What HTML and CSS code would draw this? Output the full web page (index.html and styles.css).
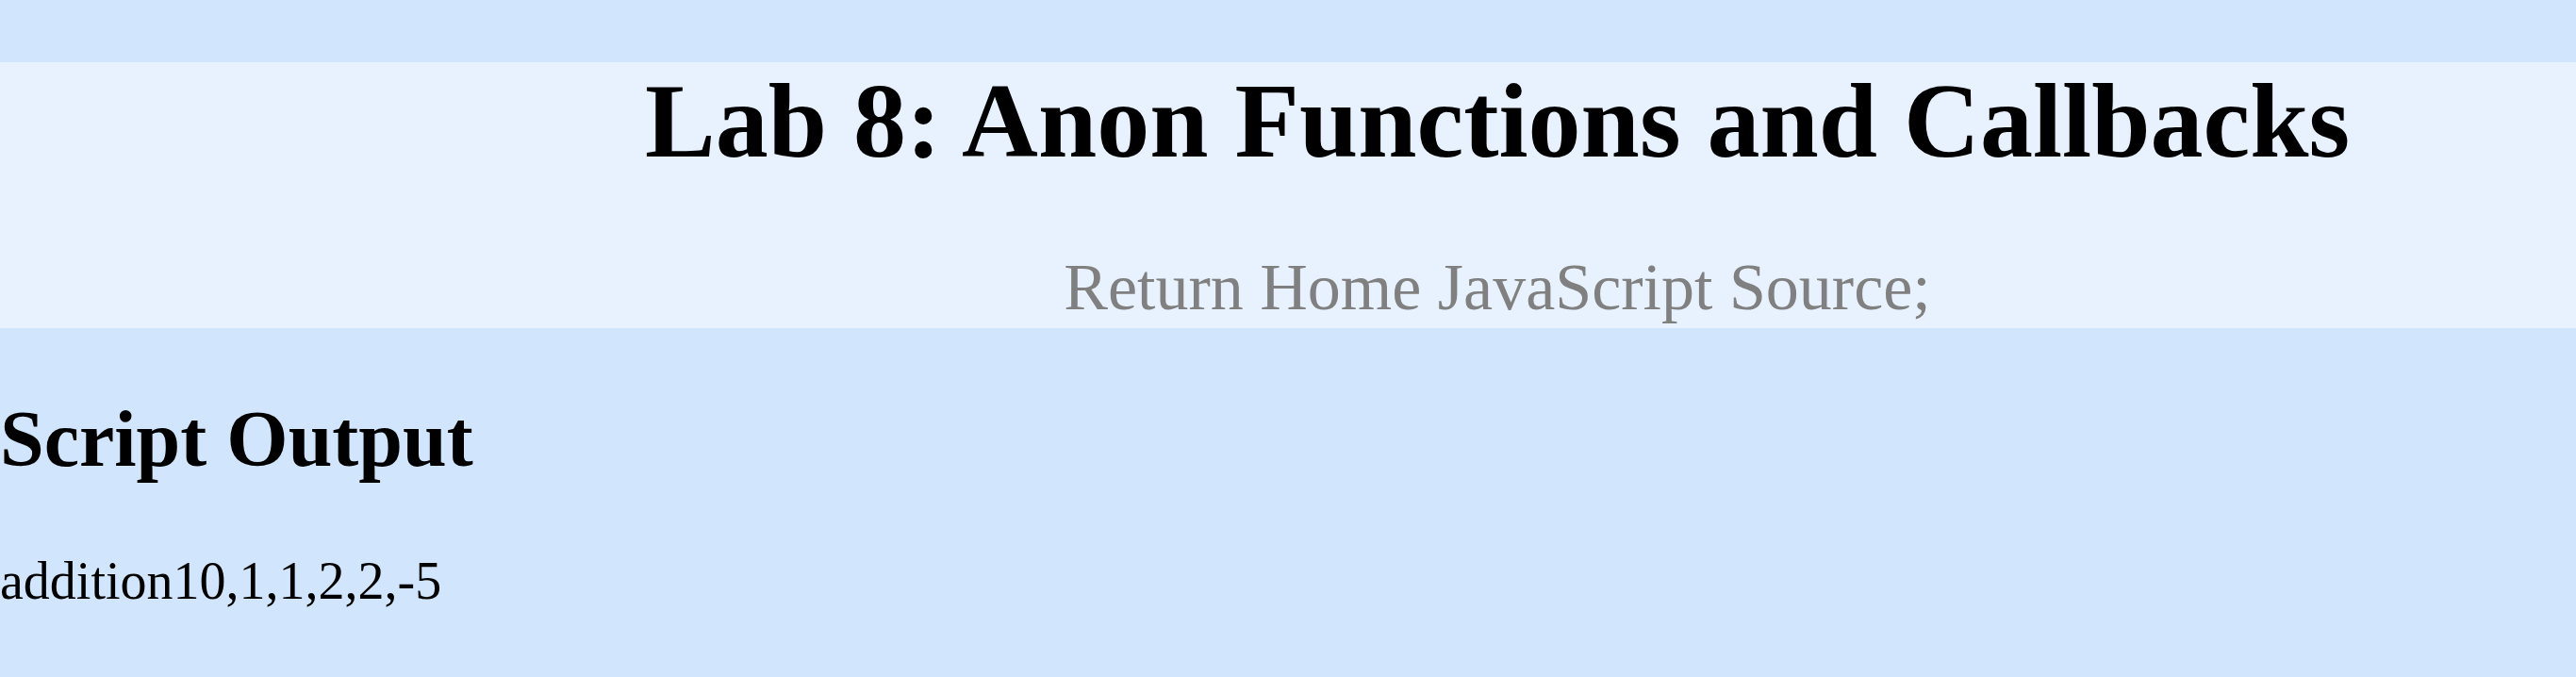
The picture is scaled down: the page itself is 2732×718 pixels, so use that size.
FILE: index.html
```html
<!DOCTYPE html>
<html>
<head>
<meta charset="utf-8">
<title>Lab 8</title>
<link rel="stylesheet" href="styles.css">
</head>
<body>
<header class="banner">
  <h1 class="title">Lab 8: Anon Functions and Callbacks</h1>
  <nav class="links">Return Home JavaScript Source;</nav>
</header>
<main class="content">
  <h2 class="section-title">Script Output</h2>
  <p class="output">addition10,1,1,2,2,-5</p>
</main>
</body>
</html>
```
FILE: styles.css
```css
html, body {
  margin: 0;
  padding: 0;
}
body {
  background: #d1e5fc;
  font-family: "Liberation Serif", "Times New Roman", serif;
  color: #000;
  width: 2732px;
  height: 718px;
  overflow: hidden;
}
.banner {
  margin-top: 66px;
  height: 282px;
  box-sizing: border-box;
  background: #e7f2fe;
  padding: 6px 0 0 444px;
  text-align: center;
  display: flex;
  flex-direction: column;
  align-items: center;
  gap: 86px;
}
.title {
  margin: 0;
  font-size: 112px;
  line-height: 1;
  font-weight: bold;
}
.links {
  font-size: 70px;
  line-height: 1;
  color: #808080;
}
.content {
  padding-top: 76px;
}
.section-title {
  margin: 0;
  font-size: 84px;
  line-height: 1;
  font-weight: bold;
}
.output {
  margin: 80px 0 0 0;
  font-size: 56px;
  line-height: 1;
}
```
